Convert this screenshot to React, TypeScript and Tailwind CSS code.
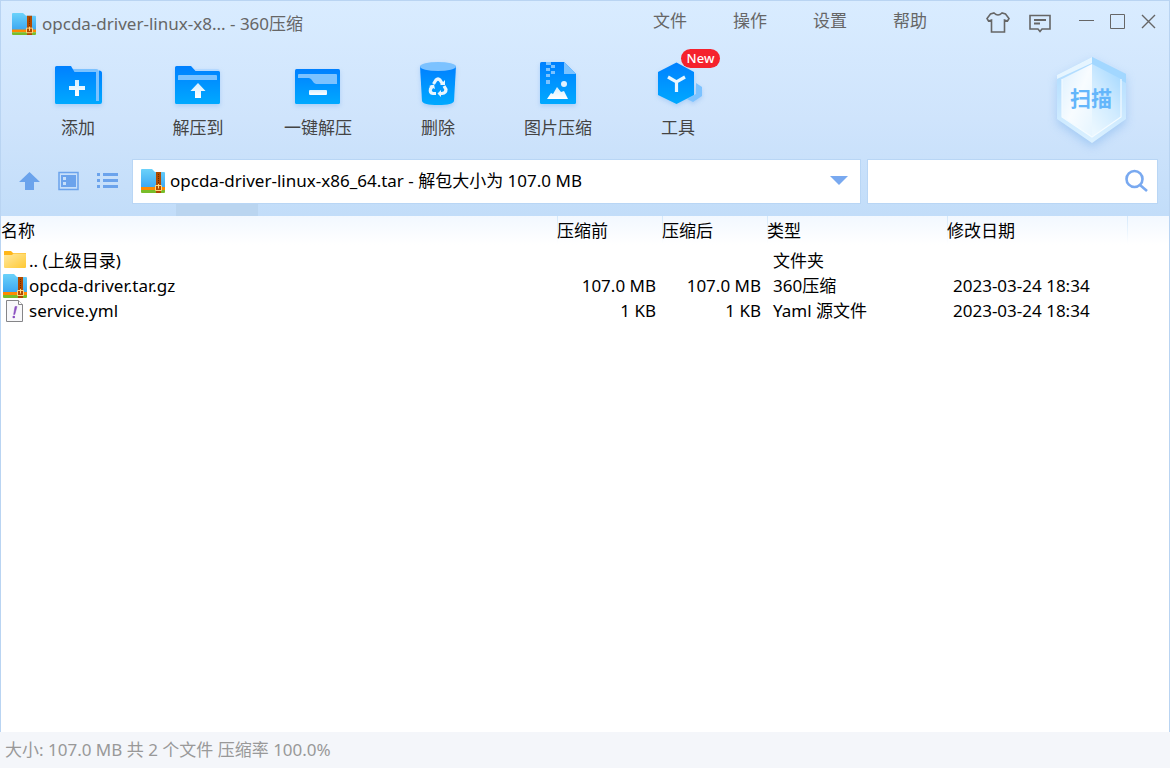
import type { ReactNode } from "react";

const menus = ["文件", "操作", "设置", "帮助"];

const columns = [
  { label: "名称", width: "w-[556px]" },
  { label: "压缩前", width: "w-[105px]" },
  { label: "压缩后", width: "w-[105px]" },
  { label: "类型", width: "w-[180px]" },
  { label: "修改日期", width: "w-[180px]" },
];

function ArchiveIcon({ className = "h-6 w-6" }: { className?: string }) {
  return (
    <svg viewBox="0 0 24 24" preserveAspectRatio="none" className={`shrink-0 ${className}`} aria-hidden="true">
      <defs>
        <linearGradient id="archive-blue" x1="0" y1="0" x2="0" y2="1">
          <stop offset="0" stopColor="#6bd2fa" />
          <stop offset="1" stopColor="#3ba6f2" />
        </linearGradient>
      </defs>
      <path d="M0 1Q0 0 1 0H11L14 3H23Q24 3 24 4V19H0Z" fill="url(#archive-blue)" />
      <path d="M0 18H24V21H0Z" fill="#ff8a00" />
      <path d="M0 21H24V23Q24 24 23 24H1Q0 24 0 23Z" fill="#79bd29" />
      <path d="M15 3H20V24H15Z" fill="#b04a00" />
      <path d="M17.5 5V15" stroke="#6b2900" strokeWidth="1" strokeDasharray="1 1" />
      <path d="M14.5 16.5H20.5V21.5H14.5ZM17.5 15V19.5" fill="none" stroke="#ffd680" strokeWidth="1" />
    </svg>
  );
}

function FolderIcon() {
  return (
    <svg viewBox="0 0 24 24" className="h-6 w-6 shrink-0" aria-hidden="true">
      <defs>
        <linearGradient id="folder-yellow" x1="0" y1="0" x2="1" y2="1">
          <stop offset="0" stopColor="#ffe9a2" />
          <stop offset="1" stopColor="#ffc932" />
        </linearGradient>
      </defs>
      <path d="M1 2.5Q1 2 1.5 2H8L10 4H23V8H1Z" fill="#ffb619" />
      <path d="M1 6H9L10.5 4.500H23V18Q23 19 22 19H2Q1 19 1 18Z" fill="url(#folder-yellow)" />
    </svg>
  );
}

function YamlIcon() {
  return (
    <svg viewBox="0 0 24 24" className="h-6 w-6 shrink-0" aria-hidden="true">
      <path d="M3.5 1.5H15.5L19.5 5.5V22.5H3.5Z" fill="#f8f8fa" stroke="#858588" />
      <path d="M15.5 1.5V5.5H19.5" fill="#fff" stroke="#858588" />
      <path d="M12 7.5H14L11.8 15.5H10.6Z" fill="#8a4fc0" stroke="#8a4fc0" strokeWidth="0.5" />
      <circle cx="10.8" cy="18" r="1.3" fill="#8a4fc0" />
    </svg>
  );
}

function ToolSvg({ children }: { children: ReactNode }) {
  return (
    <svg viewBox="0 0 48 48" className="h-12 w-12 drop-shadow-[0_2px_2px_rgba(60,140,230,0.25)]" aria-hidden="true">
      <defs>
        <linearGradient id="tool-blue" x1="0" y1="0" x2="0" y2="1">
          <stop offset="0" stopColor="#0080ff" />
          <stop offset="1" stopColor="#00a9ff" />
        </linearGradient>
        <linearGradient id="tool-white" x1="0" y1="0" x2="0" y2="1">
          <stop offset="0" stopColor="#d5eeff" />
          <stop offset="1" stopColor="#ffffff" />
        </linearGradient>
      </defs>
      {children}
    </svg>
  );
}

const tools = [
  {
    label: "添加",
    icon: (
      <ToolSvg>
        <path d="M19 9H42Q45 9 45 12V42H19Z" fill="#7cc2ff" />
        <path d="M1 7.5Q1 6 2.5 6H17L20.5 12H42V44H2.5Q1 44 1 42.5Z" fill="url(#tool-blue)" />
        <path d="M42 12H45V41H42Z" fill="#7cc2ff" />
        <path d="M45 10.5Q48 10.5 48 13V42Q48 44 46 44H42V41H45Z" fill="url(#tool-blue)" />
        <path d="M21 20H25V26H31V30H25V36H21V30H15V26H21Z" fill="url(#tool-white)" />
      </ToolSvg>
    ),
  },
  {
    label: "解压到",
    icon: (
      <ToolSvg>
        <path d="M18 9H43Q46 9 46 12H20Z" fill="#b4d9ff" />
        <path d="M1 7.5Q1 6 2.5 6H17L21.5 11H44.5Q46 11 46 12.5V42.5Q46 44 44.5 44H2.5Q1 44 1 42.5Z" fill="url(#tool-blue)" />
        <path d="M4 16Q4 15 5 15H42Q43 15 43 16V20H4Z" fill="#7cc2ff" />
        <path d="M24 23L31.5 31H27V38H21V31H16.5Z" fill="url(#tool-white)" />
      </ToolSvg>
    ),
  },
  {
    label: "一键解压",
    icon: (
      <ToolSvg>
        <rect x="1" y="9" width="45" height="35" rx="1.5" fill="url(#tool-blue)" />
        <path d="M4 15Q4 14 5 14H42Q43 14 43 15V24H22L20 23L17 19L15 18H4Z" fill="#7cc2ff" />
        <rect x="15" y="30" width="18" height="5" rx="1" fill="url(#tool-white)" />
      </ToolSvg>
    ),
  },
  {
    label: "删除",
    icon: (
      <ToolSvg>
        <path d="M6 6H42L40 41Q39 45 24 45T8 41Z" fill="url(#tool-blue)" />
        <ellipse cx="24" cy="6.5" rx="18" ry="4.5" fill="#7cc2ff" />
        <g fill="none" stroke="#e8f6ff" strokeWidth="3.2">
          <path d="M19.5 24L22 20Q24 18 26 20L28.5 24" />
          <path d="M30 26L32 29.5Q32 33 28 33.5H25" />
          <path d="M22 33.5H19Q15.5 33 16.5 29L18.5 26" />
        </g>
        <path d="M26 25H31V20ZM27 30V37L23.5 33.5ZM15 26L20 24.5L21 29Z" fill="#e8f6ff" />
      </ToolSvg>
    ),
  },
  {
    label: "图片压缩",
    icon: (
      <ToolSvg>
        <path d="M6 3.5Q6 2 7.5 2H30L42 14V42.5Q42 44 40.5 44H7.5Q6 44 6 42.5Z" fill="url(#tool-blue)" />
        <path d="M30 2L42 14H30Z" fill="#7cc2ff" />
        <path d="M12 2H17V5H12ZM17 5H21V8H17ZM12 8H16V11H12ZM17 11H21V14H17ZM12 14H16V17H12ZM12 20H16V24H12Z" fill="#7cc2ff" />
        <circle cx="30" cy="24" r="3" fill="#dff2ff" />
        <path d="M13 39L17 33L19 34L23 27L27 32L30 31L34 39Z" fill="url(#tool-white)" />
      </ToolSvg>
    ),
  },
  {
    label: "工具",
    isNew: true,
    icon: (
      <ToolSvg>
        <path d="M42 23L48 27V36L39 42L33 39L42 34Z" fill="#7cc2ff" />
        <path d="M22.5 2.5L40 12V35L22.5 44L4 35V12Z" fill="url(#tool-blue)" />
        <path d="M14 17L22.5 22L31 17M22.5 21V32" fill="none" stroke="#e8f6ff" strokeWidth="3.2" />
      </ToolSvg>
    ),
  },
];

const rows = [
  { icon: <FolderIcon />, name: ".. (上级目录)", before: "", after: "", type: "文件夹", date: "" },
  {
    icon: <ArchiveIcon />,
    name: "opcda-driver.tar.gz",
    before: "107.0 MB",
    after: "107.0 MB",
    type: "360压缩",
    date: "2023-03-24 18:34",
  },
  { icon: <YamlIcon />, name: "service.yml", before: "1 KB", after: "1 KB", type: "Yaml 源文件", date: "2023-03-24 18:34" },
];

function TitleBar() {
  return (
    <div className="flex h-11 items-start text-[#666]">
      <div className="flex min-w-0 flex-1 items-center gap-[6px] pt-[10px] pl-[11px]">
        <ArchiveIcon className="h-[22px] w-6" />
        <h1 className="truncate leading-[26px]">opcda-driver-linux-x8... - 360压缩</h1>
      </div>
      <nav className="flex pt-[7px]">
        {menus.map((menu) => (
          <button key={menu} type="button" className="w-20 leading-[26px]">
            {menu}
          </button>
        ))}
      </nav>
      <div className="flex items-center gap-[18px] pt-[9px] pr-3 pl-9">
        <button type="button" aria-label="换肤">
          <svg viewBox="0 0 24 24" className="h-6 w-6" fill="none" stroke="#666" strokeWidth="1.6">
            <path d="M8 3Q12 7 16 3L19.5 4L23 8.5L21.5 11L18.5 10V22H5.5V10L2.5 11L1 8.5L4.5 4Z" />
          </svg>
        </button>
        <button type="button" aria-label="反馈">
          <svg viewBox="0 0 24 24" className="h-6 w-6" fill="none" stroke="#666" strokeWidth="1.6">
            <path d="M2 5.5H22V19H14L12 21.5L10 19H2Z" />
            <path d="M6 10H18M6 13.5H12" strokeWidth="2" />
          </svg>
        </button>
        <div className="flex gap-[15px] pl-[9px]">
          <button type="button" aria-label="最小化">
            <svg viewBox="0 0 16 16" className="h-4 w-4" stroke="#666">
              <path d="M0 6.5H15" />
            </svg>
          </button>
          <button type="button" aria-label="最大化">
            <svg viewBox="0 0 16 16" className="h-4 w-4" fill="none" stroke="#666">
              <path d="M0.5 0.5H14.5V14.5H0.5Z" />
            </svg>
          </button>
          <button type="button" aria-label="关闭">
            <svg viewBox="0 0 16 16" className="h-4 w-4" stroke="#666" strokeWidth="1.4">
              <path d="M1 1L14 14M14 1L1 14" />
            </svg>
          </button>
        </div>
      </div>
    </div>
  );
}

function ScanButton() {
  return (
    <button type="button" className="relative mt-3 mr-[43px] ml-auto h-[86px] w-[70px] shrink-0">
      <svg viewBox="0 0 70 86" className="absolute inset-0 overflow-visible drop-shadow-[0_4px_5px_rgba(70,145,230,0.3)]" aria-hidden="true">
        <defs>
          <linearGradient id="scan-left" x1="0" y1="0" x2="1" y2="1">
            <stop offset="0" stopColor="#dcf0ff" />
            <stop offset="0.5" stopColor="#f8fcff" />
            <stop offset="1" stopColor="#e6f5ff" />
          </linearGradient>
          <linearGradient id="scan-right" x1="0.8" y1="0" x2="0.2" y2="1">
            <stop offset="0" stopColor="#a6d9ff" />
            <stop offset="0.5" stopColor="#d0ebff" />
            <stop offset="1" stopColor="#eaf7ff" />
          </linearGradient>
          <linearGradient id="scan-edge" x1="0" y1="0" x2="0" y2="1">
            <stop offset="0" stopColor="#aad9ff" />
            <stop offset="1" stopColor="#dcf1ff" />
          </linearGradient>
        </defs>
        <path d="M36 0L70 17V62L36 86L1 62V18Z" fill="url(#scan-edge)" />
        <path d="M36 0L70 17V26L36 8Z" fill="#a2d7ff" />
        <path d="M36 0L1 18V22L36 6Z" fill="#e6f5ff" />
        <path d="M36 7L6 22V60L36 80Z" fill="url(#scan-left)" />
        <path d="M36 7L65 22V60L36 80Z" fill="url(#scan-right)" />
        <path d="M65 22V60L36 80L6 60V22" fill="none" stroke="#f4fbff" strokeWidth="1.2" />
      </svg>
      <span className="relative block pb-1 text-[21px] leading-7 font-bold text-[#64b6fb]">扫描</span>
    </button>
  );
}

function Toolbar() {
  return (
    <div className="flex h-[114px] items-start pl-[17px]">
      {tools.map((tool) => (
        <button key={tool.label} type="button" className="relative flex w-[120px] flex-col items-center pt-[15px]">
          {tool.icon}
          <span className="mt-[7px] leading-[26px] text-[#444]">{tool.label}</span>
          {tool.isNew && (
            <span className="absolute top-1 left-[63px] h-[19px] w-[39px] rounded-full bg-[#f5222d] text-center text-[13px] leading-[19px] font-medium text-white">
              New
            </span>
          )}
        </button>
      ))}
      <ScanButton />
    </div>
  );
}

function AddressBar() {
  return (
    <div className="flex items-start pr-[11px]">
      <div className="flex h-[43px] w-[131px] shrink-0 items-center gap-[15px] pl-4 text-[#6ba3ec]">
        <button type="button" aria-label="上级目录">
          <svg viewBox="0 0 24 24" className="h-6 w-6" fill="currentColor">
            <path d="M12.5 3L23 13H17V21H8V13H2Z" />
          </svg>
        </button>
        <button type="button" aria-label="预览视图">
          <svg viewBox="0 0 24 24" className="h-6 w-6">
            <path d="M3 3.500H22V20.5H3Z" fill="none" stroke="currentColor" strokeWidth="1.5" />
            <path d="M5 6H20V18H5ZM7 8V11H10V8ZM7 13V16H10V13Z" fill="currentColor" fillRule="evenodd" />
          </svg>
        </button>
        <button type="button" aria-label="列表视图">
          <svg viewBox="0 0 24 24" className="h-6 w-6" fill="currentColor">
            <path d="M2 4H5V7H2ZM2 10H5V13H2ZM2 16H5V19H2ZM8 4H23V7H8ZM8 10H23V13H8ZM8 16H23V19H8Z" />
          </svg>
        </button>
      </div>
      <div className="flex h-[45px] min-w-0 flex-[707] items-center border border-[#b9d6f5] bg-white pr-3 pb-[2px] pl-2">
        <ArchiveIcon />
        <select aria-label="路径" className="h-6 min-w-0 flex-1 appearance-none bg-transparent pb-[2px] pl-[5px] leading-6 text-black outline-none">
          <option>opcda-driver-linux-x86_64.tar - 解包大小为 107.0 MB</option>
        </select>
        <svg viewBox="0 0 18 9" className="pointer-events-none h-[9px] w-[18px] shrink-0" aria-hidden="true">
          <path d="M0 0H18L9 9Z" fill="#79a9f0" />
        </svg>
      </div>
      <div className="ml-[6px] flex h-[45px] min-w-0 flex-[280] items-center border border-[#b9d6f5] bg-white pr-[9px] pb-[2px]">
        <input type="text" aria-label="搜索" className="h-full min-w-0 flex-1 px-2 outline-none" />
        <button type="button" aria-label="开始搜索">
          <svg viewBox="0 0 24 24" className="h-6 w-6" fill="none" stroke="#79a9f0" strokeWidth="2.6">
            <circle cx="10.5" cy="10" r="8" />
            <path d="M16 16L23 22" />
          </svg>
        </button>
      </div>
    </div>
  );
}

function FileTable() {
  return (
    <table className="w-full table-fixed border-collapse text-black">
      <thead>
        <tr className="h-8 bg-linear-to-b from-[#f2f8ff] to-white to-90% text-left align-top">
          {columns.map((column, i) => (
            <th key={column.label} scope="col" className={`${column.width} p-0 font-normal`}>
              <div
                className={`bg-linear-to-b from-[#d3e8fb] to-white bg-[length:1px_100%] bg-no-repeat pt-[2px] leading-[26px] whitespace-nowrap ${i === 0 ? "bg-none" : ""}`}
              >
                {column.label}
              </div>
            </th>
          ))}
          <td className="p-0">
            <div className="h-7 w-px bg-linear-to-b from-[#d3e8fb] to-white" />
          </td>
        </tr>
      </thead>
      <tbody>
        {rows.map((row) => (
          <tr key={row.name} className="h-[25px] leading-[25px] whitespace-nowrap">
            <td className="p-0">
              <div className="flex items-center gap-[2px] pl-[2px]">
                {row.icon}
                <span>{row.name}</span>
              </div>
            </td>
            <td className="p-0 pr-[6px] text-right">{row.before}</td>
            <td className="p-0 pr-[6px] text-right">{row.after}</td>
            <td className="p-0 pl-[6px]">{row.type}</td>
            <td className="p-0 pl-[6px]">{row.date}</td>
            <td />
          </tr>
        ))}
      </tbody>
    </table>
  );
}

export default function App() {
  return (
    <div className="flex min-h-screen flex-col bg-white font-['Noto_Sans','Noto_Sans_CJK_SC',sans-serif] text-[17px]">
      <div className="flex flex-1 flex-col border-x border-t border-[#b9d4f2]">
        <header className="bg-linear-to-b from-[#d9ecff] via-[#cfe4fc] via-55% to-[#c2ddf9]">
          <TitleBar />
          <Toolbar />
          <AddressBar />
          {/* Collapsed tab strip */}
          <div className="flex h-3 pl-[175px]">
            <div className="h-full w-[82px] bg-[#bad5f0]" />
          </div>
        </header>
        <main className="flex-1">
          <FileTable />
        </main>
      </div>
      <footer className="h-9 bg-[#f4f6fa] pl-[5px] leading-9 text-[#999]">大小: 107.0 MB 共 2 个文件 压缩率 100.0%</footer>
    </div>
  );
}
